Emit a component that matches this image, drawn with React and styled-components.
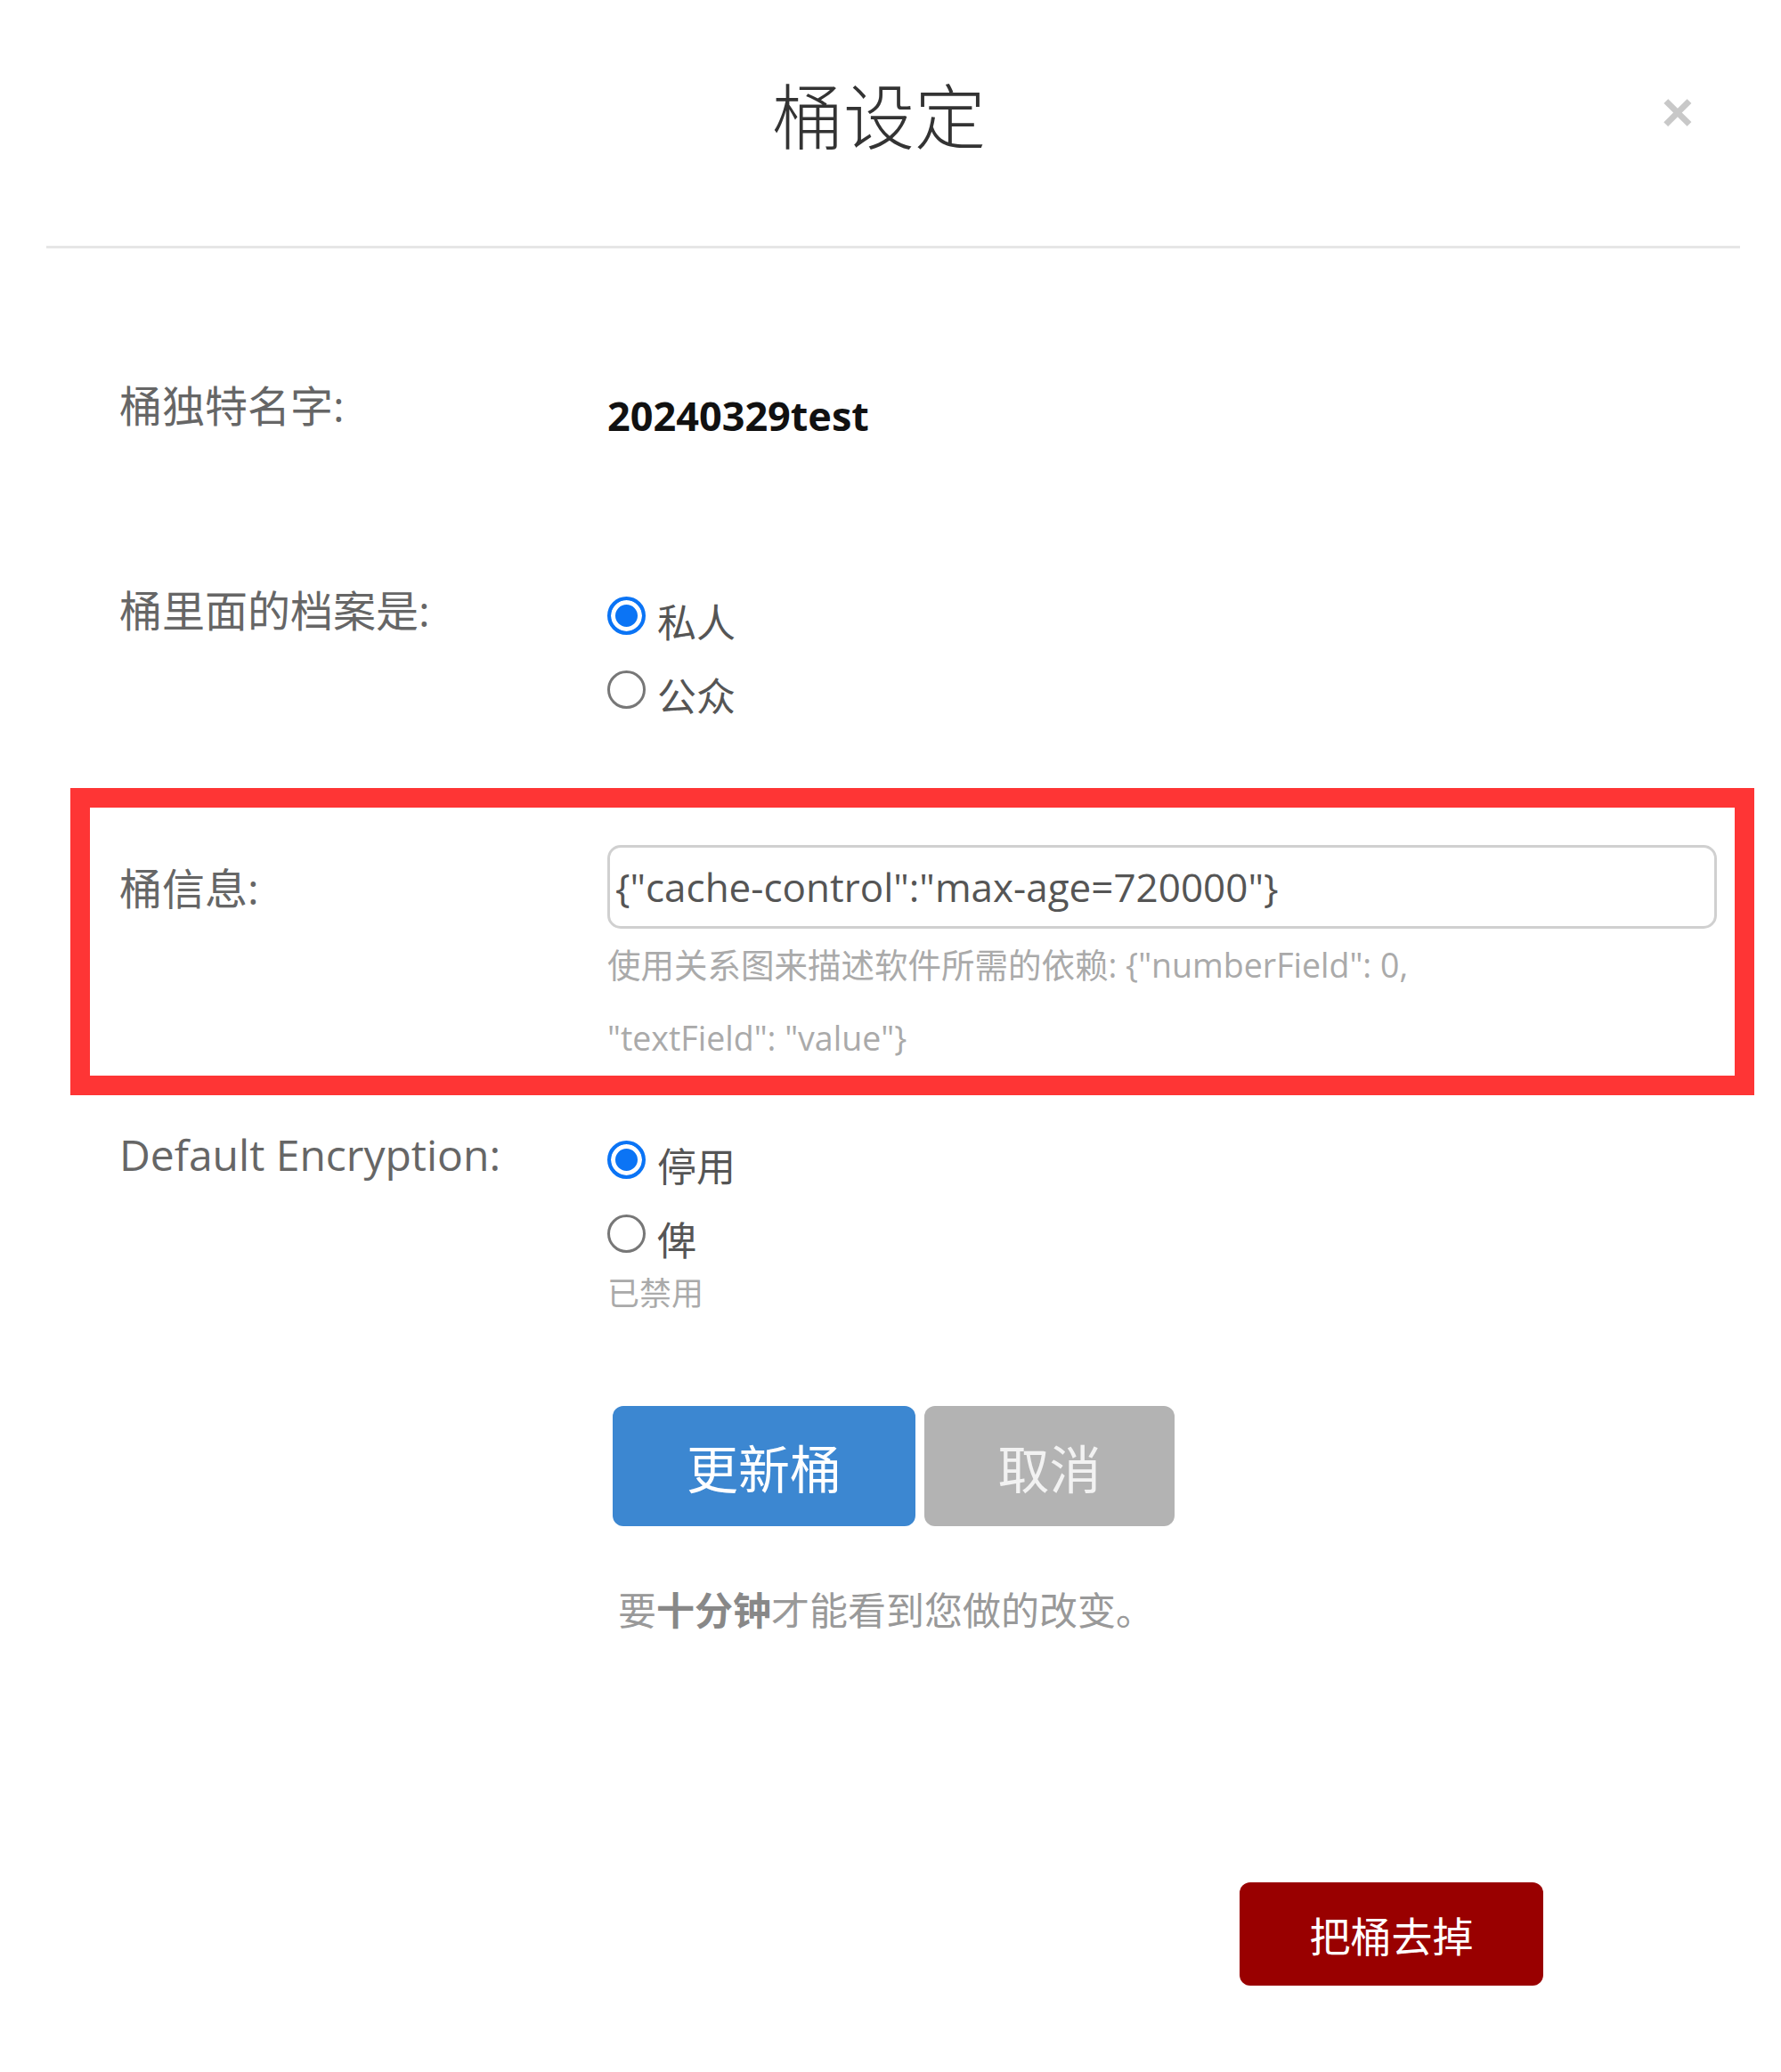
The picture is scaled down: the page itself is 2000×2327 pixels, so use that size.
import React from 'react';
import styled, { createGlobalStyle } from 'styled-components';

const GlobalStyle = createGlobalStyle`
	body {
		margin: 0;
		background: #fff;
		font-family: 'Open Sans', 'Noto Sans CJK SC', sans-serif;
	}
`;

const Modal = styled.div`
	width: 1902px;
	min-height: 2327px;
	margin-left: 52px;
	box-sizing: border-box;
`;

const Header = styled.div`
	height: 186px;
	border-bottom: 3px solid #e6e6e6;
	display: grid;
	grid-template-columns: 1fr auto 1fr;
	align-items: start;
	padding-top: 90px;
`;

const Title = styled.h1`
	grid-column: 2;
	margin: 0 32px 0 0;
	font-size: 80px;
	line-height: 80px;
	font-weight: 300;
	color: #333;
`;

const Close = styled.button`
	grid-column: 3;
	justify-self: end;
	margin: 4px 52px 0 0;
	padding: 0;
	border: 0;
	background: none;
	font-family: 'Liberation Sans', sans-serif;
	font-size: 62px;
	line-height: 64px;
	font-weight: 700;
	color: #c8c8c8;
	cursor: pointer;
`;

const Body = styled.div`
	padding-left: 82px;
	padding-right: 26px;
`;

const Row = styled.div`
	position: relative;
	display: grid;
	grid-template-columns: 548px 1fr;
	align-items: start;
	margin-top: ${p => p.top}px;

	${p => p.marked && `
		&::after {
			content: '';
			position: absolute;
			top: -64px;
			bottom: -23px;
			left: -55px;
			right: -42px;
			border: 22px solid #fe3535;
			pointer-events: none;
		}
	`}
`;

const Label = styled.div`
	font-size: 48px;
	line-height: 72px;
	color: #666;
	padding-top: ${p => p.offset || 0}px;
`;

const Value = styled.div`
	font-size: 45px;
	line-height: 72px;
	font-weight: 700;
	color: #111;
	margin-top: 11px;
	height: 61px;
`;

const Options = styled.div`
	display: flex;
	flex-direction: column;
`;

const Option = styled.label`
	display: flex;
	align-items: center;
	gap: 13px;
	height: 83px;
	font-size: 44px;
	color: #555;
	span {
		padding-top: 10px;
	}
`;

const Radio = styled.span`
	width: 43px;
	height: 43px;
	box-sizing: border-box;
	border-radius: 50%;
	border: ${p => (p.checked ? '4px solid #0b74f5' : '3px solid #777')};
	background: ${p => (p.checked ? '#0b74f5' : '#fff')};
	box-shadow: ${p => (p.checked ? 'inset 0 0 0 5px #fff' : 'none')};
	flex-shrink: 0;
	padding: 0 !important;
`;

const Input = styled.input`
	width: 100%;
	height: 94px;
	box-sizing: border-box;
	border: 3px solid #d0d0d0;
	border-radius: 15px;
	padding: 0 6px;
	font-family: 'Open Sans', 'Noto Sans CJK SC', sans-serif;
	font-size: 44px;
	color: #555;
	outline: none;
`;

const Help = styled.div`
	font-size: 37.5px;
	line-height: 82px;
	color: #aaa;
`;

const Note = styled.div`
	font-size: 36px;
	line-height: 48px;
	color: #aaa;
	margin-top: 2px;
`;

const Actions = styled.div`
	display: flex;
	gap: 10px;
	margin: 102px 0 0 554px;
`;

const Button = styled.button`
	width: ${p => p.w}px;
	height: ${p => p.h}px;
	border: 0;
	border-radius: 12px;
	background: ${p => p.bg};
	color: ${p => p.fg};
	font-family: 'Open Sans', 'Noto Sans CJK SC', sans-serif;
	font-size: ${p => p.size}px;
	cursor: pointer;
`;

const Hint = styled.p`
	margin: 65px 0 0 560px;
	font-size: 43px;
	line-height: 60px;
	color: #999;
	b {
		font-weight: 700;
		color: #888;
	}
`;

const Footer = styled.div`
	display: flex;
	justify-content: flex-end;
	padding-right: 221px;
	margin-top: 275px;
`;

const App = () => (
	<Modal>
		<GlobalStyle />
		<Header>
			<Title>桶设定</Title>
			<Close>×</Close>
		</Header>
		<Body>
			<Row top={141}>
				<Label>桶独特名字:</Label>
				<Value>20240329test</Value>
			</Row>
			<Row top={158}>
				<Label>桶里面的档案是:</Label>
				<Options>
					<Option><Radio checked /><span>私人</span></Option>
					<Option><Radio /><span>公众</span></Option>
				</Options>
			</Row>
			<Row top={133} marked>
				<Label offset={13}>桶信息:</Label>
				<div>
					<Input defaultValue={'{"cache-control":"max-age=720000"}'} />
					<Help>
						使用关系图来描述软件所需的依赖: {'{"numberField": 0,'}
						<br />
						{'"textField": "value"}'}
					</Help>
				</div>
			</Row>
			<Row top={54}>
				<Label>Default Encryption:</Label>
				<Options>
					<Option><Radio checked /><span>停用</span></Option>
					<Option><Radio /><span>俾</span></Option>
					<Note>已禁用</Note>
				</Options>
			</Row>
			<Actions>
				<Button w={340} h={135} bg="#3c87d1" fg="#fff" size={58}>更新桶</Button>
				<Button w={281} h={135} bg="#b3b3b3" fg="#f2f2f2" size={58}>取消</Button>
			</Actions>
			<Hint>要<b>十分钟</b>才能看到您做的改变。</Hint>
		</Body>
		<Footer>
			<Button w={341} h={116} bg="#990000" fg="#fff" size={46}>把桶去掉</Button>
		</Footer>
	</Modal>
);

export default App;
